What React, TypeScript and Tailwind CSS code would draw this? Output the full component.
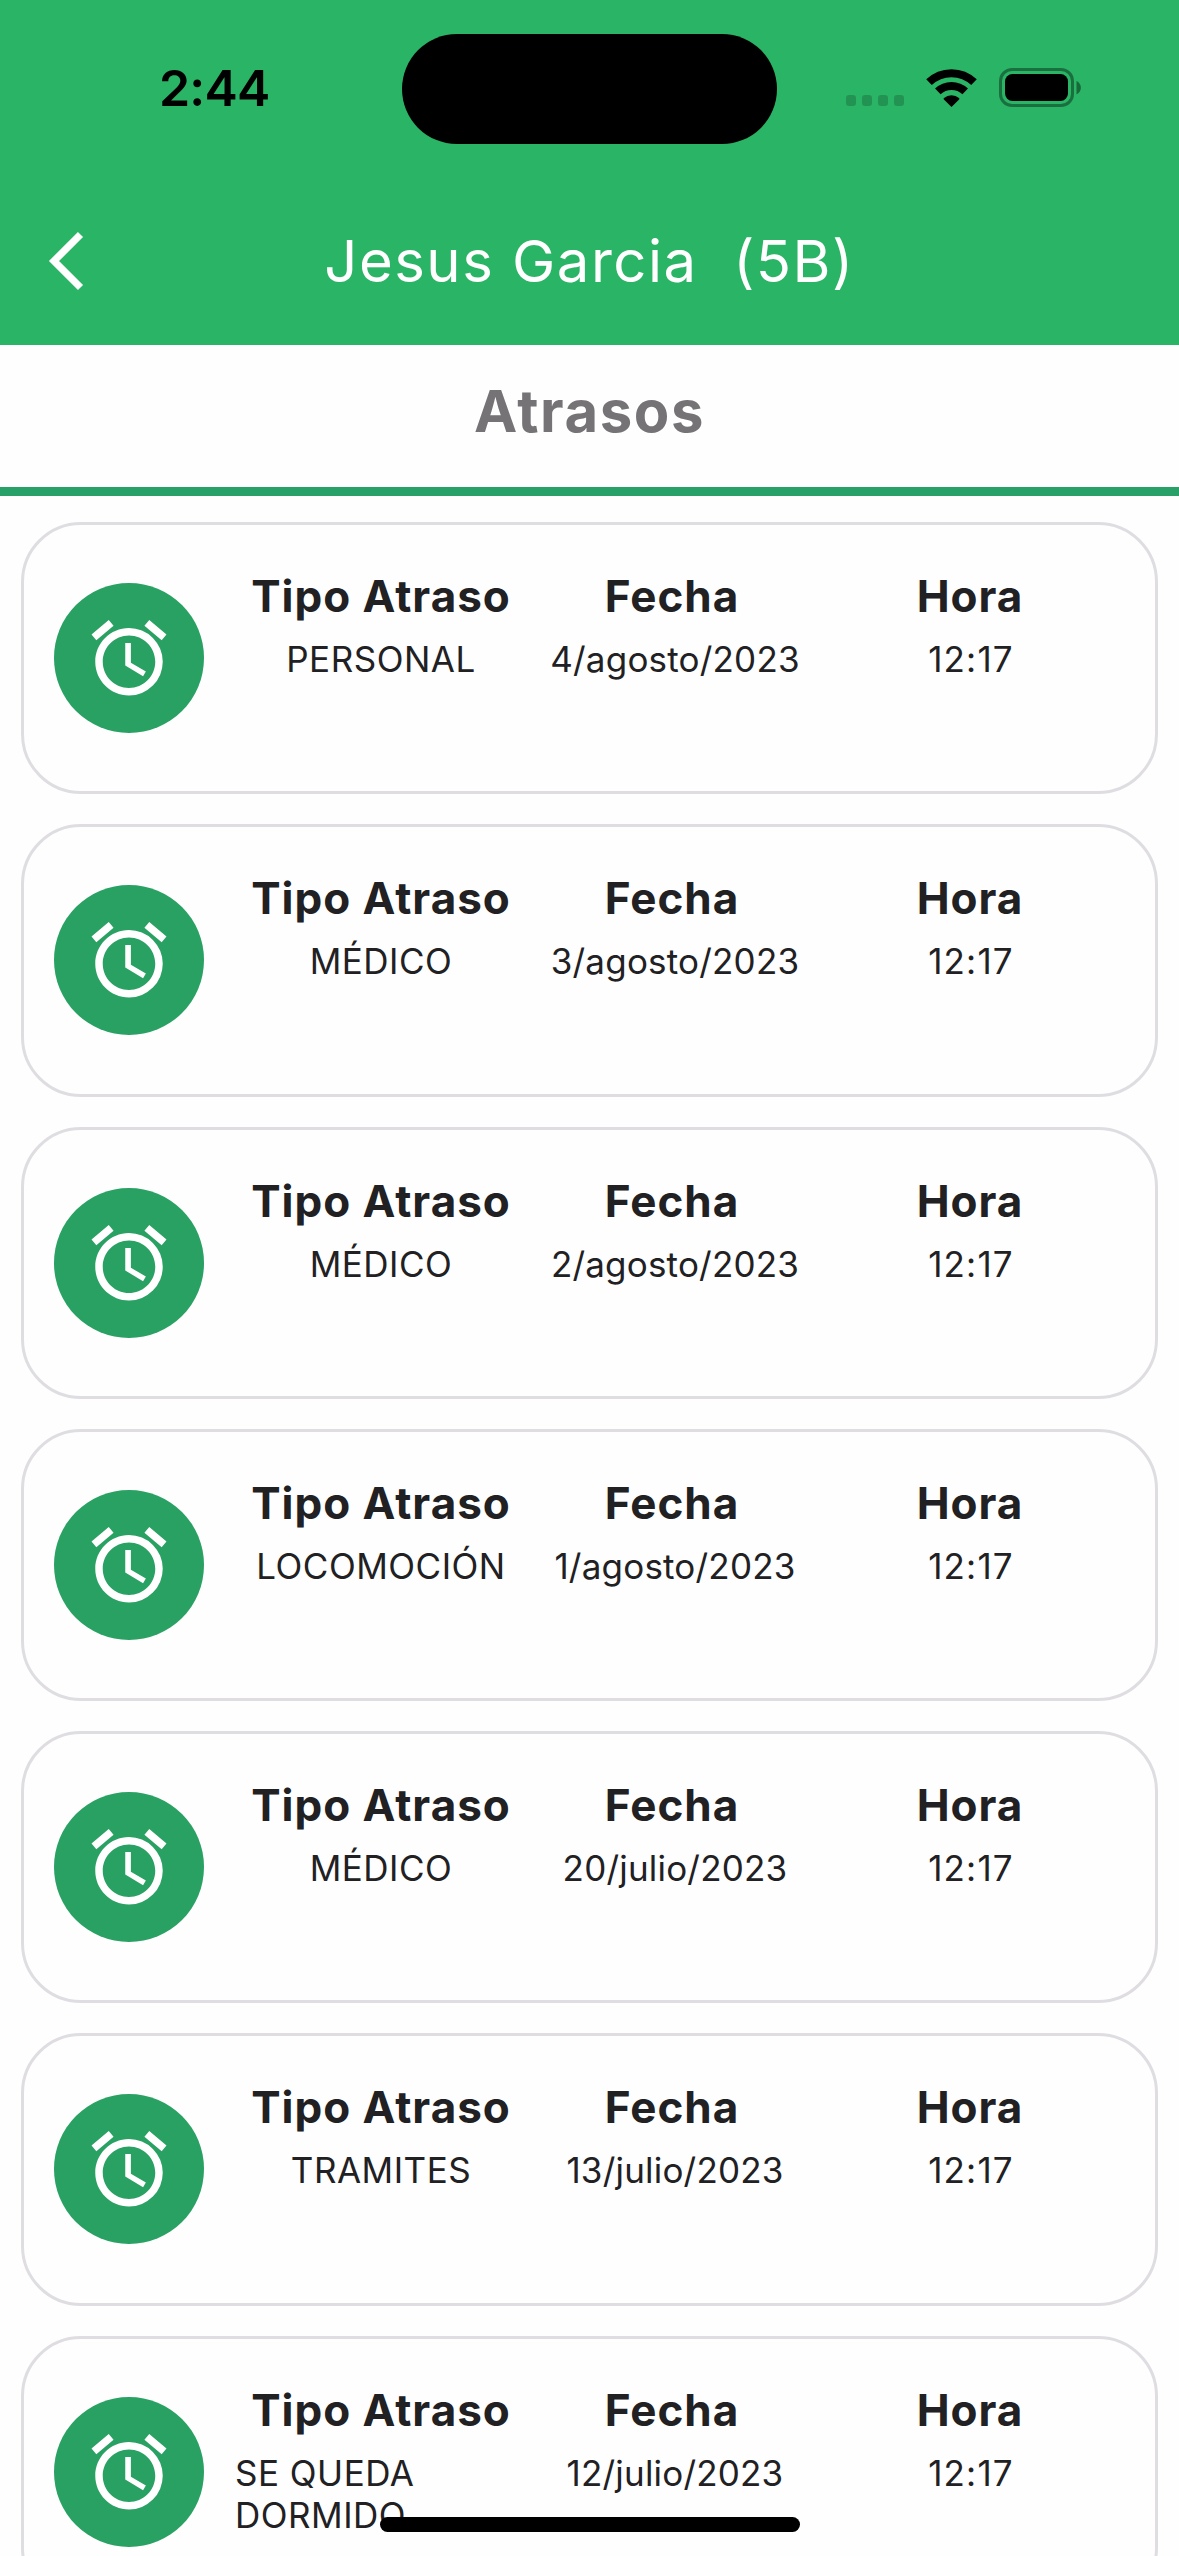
import { MdAlarm } from 'react-icons/md';

interface Atraso {
  tipo: string;
  fecha: string;
  hora: string;
}

const ATRASOS: Atraso[] = [
  { tipo: 'PERSONAL', fecha: '4/agosto/2023', hora: '12:17' },
  { tipo: 'MÉDICO', fecha: '3/agosto/2023', hora: '12:17' },
  { tipo: 'MÉDICO', fecha: '2/agosto/2023', hora: '12:17' },
  { tipo: 'LOCOMOCIÓN', fecha: '1/agosto/2023', hora: '12:17' },
  { tipo: 'MÉDICO', fecha: '20/julio/2023', hora: '12:17' },
  { tipo: 'TRAMITES', fecha: '13/julio/2023', hora: '12:17' },
  { tipo: 'SE QUEDA DORMIDO', fecha: '12/julio/2023', hora: '12:17' },
];

/* ---------------- status bar icons ----------------- */
function WifiIcon() {
  return (
    <svg className="ml-[22px] h-[38px] w-[51px]" viewBox="0 0 51 38">
      <g fill="none" stroke="#000" strokeWidth="8">
        <path d="M3 13.2A32.5 32.5 0 0 1 48 13.2" />
        <path d="M11.8 22.4A19.8 19.8 0 0 1 39.2 22.4" />
      </g>
      <path d="M25.5 38l-7.6-7.6a1 1 0 0 1 .1-1.5a11.6 11.6 0 0 1 15 0a1 1 0 0 1 .1 1.5z" />
    </svg>
  );
}

function BatteryIcon() {
  return (
    <svg className="ml-[22px] h-[39px] w-[83px]" viewBox="0 0 83 39">
      <rect x="1.5" y="1.5" width="72" height="36" rx="11.5" fill="none" stroke="#000" strokeOpacity="0.38" strokeWidth="3" />
      <rect x="6" y="6" width="63" height="27" rx="7.5" />
      <path d="M77.5 13v13.4c2.7-1.1 4.4-3.8 4.4-6.7s-1.7-5.6-4.4-6.7z" fillOpacity="0.42" />
    </svg>
  );
}

function StatusBar() {
  return (
    <div className="flex h-[176px] items-start">
      <div className="w-[402px] pt-[58px] pl-[159px] text-[50px] leading-[60px] font-semibold tracking-[-0.8px] text-black">
        2:44
      </div>
      <div className="mt-[34px] h-[110px] w-[375px] rounded-full bg-black" />
      <div className="flex items-center pt-[68px] pl-[69px]">
        <div className="mt-[26px] flex gap-[6px]">
          {[0, 1, 2, 3].map((i) => (
            <span key={i} className="h-[11px] w-[10px] rounded-[3px] bg-black/18" />
          ))}
        </div>
        <WifiIcon />
        <BatteryIcon />
      </div>
    </div>
  );
}

/* ---------------- list item ----------------- */
function AtrasoCard({ tipo, fecha, hora }: Atraso) {
  return (
    <li className="flex h-[272.3px] shrink-0 rounded-[60px] border-3 border-[#dfdde1] pl-[30px] text-[#212023]">
      <div className="mt-[58px] flex size-[150px] shrink-0 items-center justify-center rounded-full bg-[#28a163]">
        <MdAlarm className="size-[90px] text-white" />
      </div>

      <div className="ml-[31px] flex pt-[44px]">
        <div className="flex w-[292px] flex-col items-center">
          <h2 className="text-[44px] leading-[54px] font-bold tracking-[1px]">Tipo Atraso</h2>
          <p className="mt-[15px] text-[35px] leading-[42px] tracking-[0.5px]">{tipo}</p>
        </div>
        <div className="flex w-[290px] flex-col items-center">
          <h2 className="text-[44px] leading-[54px] font-bold tracking-[1px]">Fecha</h2>
          <p className="mt-[15px] pl-[6px] text-[35px] leading-[42px] tracking-[0.2px]">{fecha}</p>
        </div>
        <div className="flex w-[306px] flex-col items-center">
          <h2 className="text-[44px] leading-[54px] font-bold tracking-[1px]">Hora</h2>
          <p className="mt-[15px] pl-[2px] text-[35px] leading-[42px] tracking-[1.2px]">{hora}</p>
        </div>
      </div>
    </li>
  );
}

export default function App() {
  return (
    <div className="relative flex h-[2556px] w-[1179px] flex-col overflow-hidden bg-[#fefefe] font-['Inter',sans-serif]">
      <header className="h-[345px] shrink-0 bg-[#2ab465]">
        <StatusBar />
        <div className="grid h-[170px] grid-cols-[200px_1fr_200px] items-center">
          <button type="button" aria-label="Volver" className="pl-[48px]">
            <svg className="h-[60px] w-[36px]" viewBox="0 0 36 60">
              <path d="M32.5 3.5L6 30l26.500 26.500" fill="none" stroke="#fff" strokeWidth="7.2" />
            </svg>
          </button>
          <h1 className="text-center text-[58px] leading-[70px] font-normal tracking-[1.500px] whitespace-pre text-white">
            {'Jesus Garcia  (5B)'}
          </h1>
        </div>
      </header>

      <div className="flex h-[151px] shrink-0 justify-center border-b-[9px] border-[#28a067] pt-[30px]">
        <h2 className="text-[58px] leading-[72px] font-bold tracking-[1.6px] text-[#757376]">Atrasos</h2>
      </div>

      <ul className="flex flex-col gap-[30px] pt-[26px] pr-[21px] pl-[21px]">
        {ATRASOS.map((a) => (
          <AtrasoCard key={a.fecha} {...a} />
        ))}
      </ul>

      {/* home indicator */}
      <div className="absolute top-[2517px] left-[380px] h-[15px] w-[420px] rounded-full bg-black" />
    </div>
  );
}
